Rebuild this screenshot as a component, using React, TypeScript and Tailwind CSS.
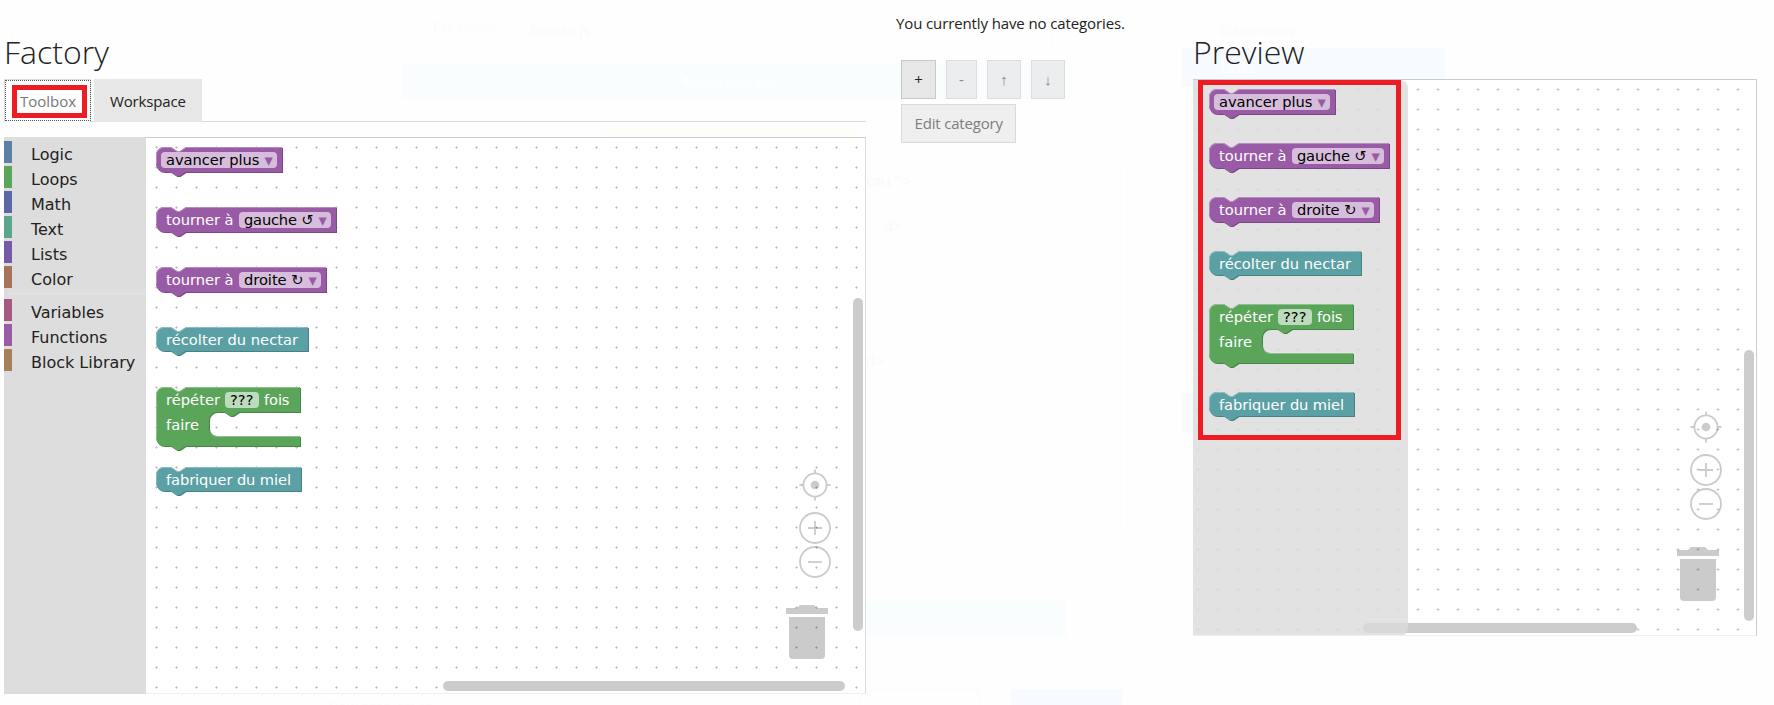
import React from "react";

type Part =
  | { kind: "label"; x: number; y: number; text: string; w: number }
  | { kind: "field"; x: number; w: number; text: string; tw: number; arrow?: boolean };

type BlockSpec = {
  color: string;
  light: string;
  dark: string;
  width: number;
  height: number;
  statement?: boolean;
  parts: Part[];
};

const PURPLE = { color: "#995ba5", light: "#b88cc0", dark: "#7a4984" };
const TEAL = { color: "#5ba0a5", light: "#8cbdc0", dark: "#498084" };
const GREEN = { color: "#5ba55b", light: "#8cc08c", dark: "#498449" };

const BLOCKS: BlockSpec[] = [
  { ...PURPLE, width: 126, height: 25, parts: [{ kind: "field", x: 5, w: 116, text: "avancer plus", tw: 93.5, arrow: true }] },
  {
    ...PURPLE, width: 180, height: 25,
    parts: [
      { kind: "label", x: 10, y: 18, text: "tourner à", w: 67.5 },
      { kind: "field", x: 83, w: 92, text: "gauche ↺", tw: 69.5, arrow: true },
    ],
  },
  {
    ...PURPLE, width: 170, height: 25,
    parts: [
      { kind: "label", x: 10, y: 18, text: "tourner à", w: 67.5 },
      { kind: "field", x: 83, w: 82, text: "droite ↻", tw: 59.5, arrow: true },
    ],
  },
  { ...TEAL, width: 152, height: 24, parts: [{ kind: "label", x: 10, y: 18, text: "récolter du nectar", w: 132 }] },
  {
    ...GREEN, width: 144, height: 59, statement: true,
    parts: [
      { kind: "label", x: 10, y: 18, text: "répéter", w: 54 },
      { kind: "field", x: 69, w: 34, text: "???", tw: 23.5 },
      { kind: "label", x: 108, y: 18, text: "fois", w: 25.5 },
      { kind: "label", x: 10, y: 43, text: "faire", w: 33 },
    ],
  },
  { ...TEAL, width: 145, height: 24, parts: [{ kind: "label", x: 10, y: 18, text: "fabriquer du miel", w: 125 }] },
];

function outline(b: BlockSpec) {
  const top = `m 0,8 A 8,8 0 0,1 8,0 H 15 l 6,4 3,0 6,-4 H ${b.width}`;
  const mid = b.statement
    ? ` v 25 H 83 l -6,4 -3,0 -6,-4 h -7 a 8,8 0 0,0 -8,8 v 8 a 8,8 0 0,0 8,8 H ${b.width} v 10`
    : ` v ${b.height}`;
  return `${top}${mid} H 29.5 l -6,4 -3,0 -6,-4 H 8 a 8,8 0 0,1 -8,-8 z`;
}

function Block({ spec, x, y }: { spec: BlockSpec; x: number; y: number }) {
  const d = outline(spec);
  const h = spec.height;
  return (
    <g transform={`translate(${x},${y})`}>
      <path d={d} fill={spec.dark} transform="translate(1,1)" />
      <path d={d} fill={spec.color} />
      <path
        d={`M 0.5,${h - 8} V 8 A 7.5,7.5 0 0,1 8,0.5 H 15 l 6,4 3,0 6,-4 H ${spec.width - 0.5}`}
        fill="none" stroke={spec.light} strokeWidth="1"
      />
      {spec.statement && (
        <path d={`M 55.3,46.7 a 8.5,8.5 0 0,0 5.7,2.8 H ${spec.width - 0.5}`} fill="none" stroke={spec.light} />
      )}
      {spec.parts.map((p, i) =>
        p.kind === "label" ? (
          <text key={i} x={p.x} y={p.y} textLength={p.w} fill="#fff">{p.text}</text>
        ) : (
          <g key={i}>
            <rect x={p.x} y="5" width={p.w} height="16" rx="4" fill="#fff" fillOpacity="0.6" />
            <text x={p.x + 5} y="18" textLength={p.tw} fill="#000">{p.text}</text>
            {p.arrow && <text x={p.x + p.w - 12.4} y="18.5" fontSize="16.5" fill={spec.color}>▾</text>}
          </g>
        )
      )}
    </g>
  );
}

function BlockStack({ x, ys }: { x: number; ys: number[] }) {
  return (
    <svg className="absolute inset-0 h-full w-full font-['DejaVu_Sans',sans-serif] text-[14.667px]">
      {BLOCKS.map((b, i) => <Block key={i} spec={b} x={x} y={ys[i]} />)}
    </svg>
  );
}

function Dots({ id, x, y }: { id: string; x: number; y: number }) {
  return (
    <svg className="absolute inset-0 h-full w-full">
      <defs>
        <pattern id={id} width="20" height="20" x={x} y={y} patternUnits="userSpaceOnUse">
          <path d="M 9,10.5 h 3 M 10.5,9 v 3" stroke="#d2d2d2" strokeWidth="1" />
          <path d="M 10,10.5 h 1" stroke="#bcbcbc" strokeWidth="1" />
        </pattern>
      </defs>
      <rect width="100%" height="100%" fill={`url(#${id})`} />
    </svg>
  );
}

function Controls({ className }: { className: string }) {
  return (
    <svg className={`absolute h-[192px] w-[46px] ${className}`} viewBox="0 0 46 192" opacity="0.2">
      <g fill="none" stroke="#000" strokeWidth="1.8">
        <circle cx="30" cy="17" r="11.6" />
        <path d="M30,1.5 v4 M30,28.5 v4 M14.5,17 h4 M41.5,17 h4" />
        <circle cx="30" cy="60" r="15" />
        <path d="M23,60 h14 M30,53 v14" />
        <circle cx="30" cy="94" r="15" />
        <path d="M23,94 h14" />
      </g>
      <circle cx="30" cy="17" r="4.3" />
      <path d="M1,140 h11 l3,-3 h14 l3,3 h11 v6 h-42 z" />
      <path d="M4,149 h36 v38 a4,4 0 0 1 -4,4 h-28 a4,4 0 0 1 -4,-4 z" />
    </svg>
  );
}

const CATEGORIES = [
  { name: "Logic", bar: "border-[#5b80a5]" },
  { name: "Loops", bar: "border-[#5ba55b]" },
  { name: "Math", bar: "border-[#5b67a5]" },
  { name: "Text", bar: "border-[#5ba58c]" },
  { name: "Lists", bar: "border-[#745ba5]" },
  { name: "Color", bar: "border-[#a5745b]" },
  null,
  { name: "Variables", bar: "border-[#a55b80]" },
  { name: "Functions", bar: "border-[#995ba5]" },
  { name: "Block Library", bar: "border-[#a5805b]" },
];

function Toolbox() {
  return (
    <div className="w-[142px] shrink-0 bg-[#ddd] pt-1 font-['DejaVu_Sans',sans-serif] text-[16px] text-[#222]">
      {CATEGORIES.map((c, i) =>
        c ? (
          <div key={i} className={`mb-[3px] h-[22px] whitespace-nowrap border-l-8 pl-[19px] leading-[27px] ${c.bar}`}>{c.name}</div>
        ) : (
          <div key={i} className="my-[5px] ml-1 h-px bg-[#e5e5e5]" />
        )
      )}
    </div>
  );
}

function Backdrop() {
  return (
    <div className="absolute inset-0 overflow-hidden text-[14px] text-[#fbfbfb]">
      <div className="absolute left-[433px] top-[17px]">File name</div>
      <div className="absolute left-[517px] top-[9px] h-[39px] w-[536px] border border-[#fcfcfc] pl-[13px] pt-[9px] text-[15px]">blocks.js</div>
      <div className="absolute left-[403px] top-[63px] flex h-9 w-[650px] items-center justify-center bg-[#f9fdfe] text-white">✚ Add new file</div>
      <div className="absolute left-[602px] top-[129px] h-[10px] w-[252px] bg-[#fefdf8]" />
      <div className="absolute left-[860px] top-[165px] h-[370px] w-[261px] border border-[#fcfcfc]" />
      <div className="absolute left-[866px] top-[601px] h-9 w-[200px] bg-[#f9fdfe]" />
      <div className="absolute left-[860px] top-[689px] h-5 w-[120px] border-2 border-[#fcfcfc]" />
      <div className="absolute left-[1011px] top-[689px] h-4 w-[111px] bg-[#f7fbff]" />
      <div className="absolute left-[1182px] top-[48px] h-[39px] w-[263px] bg-[#f7fbff] pl-[37px] pt-[9px] text-white">Tasks</div>
      <div className="absolute left-[1219px] top-[20px]">Classrooms</div>
      <div className="absolute left-[1182px] top-[393px] h-[39px] w-[12px] bg-[#f7fbff]" />
      <div className="absolute left-[328px] top-[696px]">New problem id</div>
      <div className="absolute left-[866px] top-[172px] font-['Liberation_Mono',monospace] text-[15px] text-[#fdf8f8]">cml"&gt;</div>
      <div className="absolute left-[884px] top-[217px] font-['Liberation_Mono',monospace] text-[15px] text-[#fdf8f8]">d&gt;</div>
      <div className="absolute left-[866px] top-[352px] font-['Liberation_Mono',monospace] text-[15px]">d&gt;</div>
    </div>
  );
}

const OFF = "border-[#dadcde] bg-[#ecedef] text-[#888]";

export default function App() {
  return (
    <div className="relative h-[705px] w-[1774px] overflow-hidden bg-[#fefefe] font-['Open_Sans',sans-serif] text-[15px] text-[#222]">
      <Backdrop />
      <div className="relative flex h-full">
        <section className="ml-1 w-[862px] shrink-0 pt-7">
          <h1 className="h-[51px] text-[32px] font-light leading-[48px]">Factory</h1>
          <div className="flex h-[43px] gap-[3px] border-b border-[#d8d8d8]">
            <div className="h-[43px] w-[87px] border border-b-0 border-[#ddd] bg-white">
              <div className="flex h-[41px] w-[86px] border border-dotted border-[#555] pl-1.5 pt-1">
                <div className="flex h-[33px] w-[75px] items-center justify-center border-[5px] border-[#ed1c24] text-[#777]">
                  <svg className="h-[23px] w-[65px]"><text x="3" y="17" textLength="56" fill="currentColor">Toolbox</text></svg>
                </div>
              </div>
            </div>
            <div className="h-[43px] w-[108px] bg-[#e7e7e7]">
              <svg className="h-full w-full"><text x="16" y="28" textLength="76" fill="currentColor">Workspace</text></svg>
            </div>
          </div>
          <div className="mt-[15px] flex h-[557px]">
            <Toolbox />
            <div className="relative flex-1 overflow-hidden border-b border-r border-t border-b-[#f0f0f0] border-r-[#ddd] border-t-[#ccc] bg-white">
              <Dots id="factory-grid" x={0} y={-1} />
              <BlockStack x={10} ys={[9, 69, 129, 189, 249, 329]} />
              <Controls className="left-[639px] top-[330px]" />
              <div className="absolute left-[707px] top-[160px] h-[333px] w-[10px] rounded-full bg-[#ccc]" />
              <div className="absolute left-[296.5px] top-[543px] h-[10px] w-[402.5px] rounded-full bg-[#ccc]" />
            </div>
          </div>
        </section>

        <section className="ml-[30px] w-[240px] shrink-0 pt-[13px]">
          <svg className="block h-[22px] w-full"><text x="0" y="16" textLength="229" fill="currentColor">You currently have no categories.</text></svg>
          <div className="ml-[5px] mt-[25px] flex gap-[10px]">
            <button className="h-[39px] w-[35px] border border-[#c8c8c8] bg-[#e7e7e7] text-[15px]">+</button>
            <button className={`h-[39px] w-[31px] border ${OFF}`}>-</button>
            <button className={`h-[39px] w-[34px] border ${OFF}`}>↑</button>
            <button className={`h-[39px] w-[34px] border ${OFF}`}>↓</button>
          </div>
          <button className="ml-[5px] mt-[5px] block h-[39px] w-[115px] border border-[#dadada] bg-[#efefef] text-[#7d7d7d]">
            <svg className="h-full w-full"><text x="12.5" y="24" textLength="88.5" fill="currentColor">Edit category</text></svg>
          </button>
        </section>

        <section className="ml-[57px] w-[564px] shrink-0 pt-7">
          <h1 className="h-[51px] text-[32px] font-light leading-[48px]">Preview</h1>
          <div className="relative h-[557px] overflow-hidden border-b border-r border-t border-b-[#f0f0f0] border-r-[#ccc] border-t-[#ccc] bg-white">
            <Dots id="preview-grid" x={-5.5} y={-1} />
            <Controls className="left-[483px] top-[330px]" />
            <div className="absolute left-[551px] top-[270px] h-[271px] w-[10px] rounded-full bg-[#ccc]" />
            <div className="absolute left-[170px] top-[543px] h-[10px] w-[274px] rounded-full bg-[#ccc]" />
            <div className="absolute left-0 top-0 h-[556px] w-[215px] rounded-r-lg bg-[#dbdbdb]/80" />
            <BlockStack x={16} ys={[9, 63, 117, 171, 224, 312]} />
            <div className="absolute left-[5px] top-0 h-[360px] w-[203px] border-[5px] border-[#ed1c24]" />
          </div>
        </section>
      </div>
    </div>
  );
}
